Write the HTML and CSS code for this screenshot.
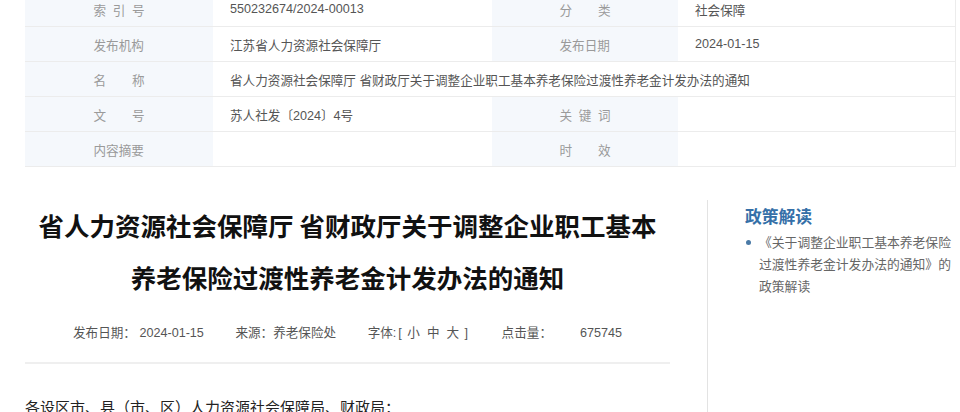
FILE: index.html
```html
<!DOCTYPE html>
<html lang="zh-CN">
<head>
<meta charset="utf-8">
<title>省人力资源社会保障厅 省财政厅关于调整企业职工基本养老保险过渡性养老金计发办法的通知</title>
<link rel="stylesheet" href="styles.css">
</head>
<body>
<div class="page">
  <table class="info">
    <colgroup>
      <col class="c-label1"><col class="c-val1"><col class="c-label2"><col class="c-val2">
    </colgroup>
    <tr>
      <th><span class="lbl"><i>索</i><i>引</i><i>号</i></span></th>
      <td>550232674/2024-00013</td>
      <th><span class="lbl"><i>分</i><i>类</i></span></th>
      <td>社会保障</td>
    </tr>
    <tr>
      <th><span class="lbl"><i>发布机构</i></span></th>
      <td>江苏省人力资源社会保障厅</td>
      <th><span class="lbl"><i>发布日期</i></span></th>
      <td>2024-01-15</td>
    </tr>
    <tr>
      <th><span class="lbl"><i>名</i><i>称</i></span></th>
      <td colspan="3">省人力资源社会保障厅 省财政厅关于调整企业职工基本养老保险过渡性养老金计发办法的通知</td>
    </tr>
    <tr>
      <th><span class="lbl"><i>文</i><i>号</i></span></th>
      <td>苏人社发〔2024〕4号</td>
      <th><span class="lbl"><i>关</i><i>键</i><i>词</i></span></th>
      <td></td>
    </tr>
    <tr>
      <th><span class="lbl"><i>内容摘要</i></span></th>
      <td></td>
      <th><span class="lbl"><i>时</i><i>效</i></span></th>
      <td></td>
    </tr>
  </table>

  <div class="main">
    <div class="article">
      <h1 class="title">省人力资源社会保障厅 省财政厅关于调整企业职工基本<br>养老保险过渡性养老金计发办法的通知</h1>
      <div class="meta">
        <span class="m-item">发布日期： 2024-01-15</span>
        <span class="m-item">来源：养老保险处</span>
        <span class="m-item">字体:<span class="br">[</span><a class="fs">小</a><a class="fs">中</a><a class="fs">大</a><span class="br">]</span></span>
        <span class="m-item">点击量：<span class="hits">675745</span></span>
      </div>
      <p class="body-text">各设区市、县（市、区）人力资源社会保障局、财政局：</p>
    </div>
    <aside class="sidebar">
      <h2 class="side-title">政策解读</h2>
      <ul class="side-list">
        <li>《关于调整企业职工基本养老保险过渡性养老金计发办法的通知》的政策解读</li>
      </ul>
    </aside>
  </div>
</div>
</body>
</html>
```
FILE: styles.css
```css
html, body {
  margin: 0;
  padding: 0;
  background: #ffffff;
  overflow: hidden;
}
body {
  font-family: "Liberation Sans", "Noto Sans CJK SC", sans-serif;
  color: #333;
}
.page {
  width: 960px;
  margin-top: -8px;
}
.info {
  margin-left: 25px;
  width: 930px;
  border-collapse: collapse;
  table-layout: fixed;
  border-right: 1px solid #ececec;
  font-size: 12.6px;
}
.c-label1 { width: 188px; }
.c-val1 { width: 279px; }
.c-label2 { width: 186px; }
.c-val2 { width: 277px; }
.info th,
.info td {
  height: 34px;
  padding: 0;
  border-bottom: 1px solid #ececec;
  vertical-align: middle;
}
.info th {
  background: #f5f8fc;
  font-weight: normal;
  color: #9a9a9a;
  text-align: center;
}
.info td {
  background: #fff;
  color: #555;
  padding-left: 17px;
  text-align: left;
  white-space: nowrap;
}
.lbl {
  display: inline-flex;
  justify-content: space-between;
  width: 51px;
  vertical-align: middle;
}
.lbl i {
  font-style: normal;
}
.main {
  display: flex;
  margin-top: 32px;
}
.article {
  width: 645px;
  margin-left: 25px;
}
.title {
  margin: 0;
  font-family: "Noto Sans CJK SC", sans-serif;
  font-size: 25.5px;
  font-weight: 700;
  line-height: 52px;
  text-align: center;
  color: #111;
  white-space: nowrap;
}
.meta {
  margin-top: 20px;
  height: 20px;
  line-height: 20px;
  padding-bottom: 19px;
  border-bottom: 2px solid #efefef;
  text-align: center;
  font-size: 12.6px;
  color: #555;
  white-space: nowrap;
}
.m-item {
  margin: 0 14px;
}
.br {
  margin: 0 2px;
}
.fs {
  margin: 0 3.5px;
  color: #555;
}
.hits {
  margin-left: 28px;
}
.body-text {
  margin: 31px 0 0;
  font-size: 15px;
  line-height: 26px;
  color: #222;
  white-space: nowrap;
}
.sidebar {
  margin-left: 37px;
  margin-top: 1px;
  border-left: 1px solid #e3e3e3;
  padding-left: 37px;
  padding-top: 4px;
  width: 210px;
  height: 240px;
}
.side-title {
  margin: 0;
  font-family: "Noto Sans CJK SC", sans-serif;
  font-size: 16.8px;
  font-weight: 700;
  line-height: 24px;
  color: #3570a8;
}
.side-list {
  list-style: none;
  margin: 4px 0 0;
  padding: 0;
}
.side-list li {
  position: relative;
  padding-left: 14px;
  width: 196px;
  font-size: 12.8px;
  line-height: 22px;
  color: #666;
}
.side-list li::before {
  content: "";
  position: absolute;
  left: 1px;
  top: 8px;
  width: 5px;
  height: 5px;
  border-radius: 50%;
  background: #4a7aa6;
}
```
